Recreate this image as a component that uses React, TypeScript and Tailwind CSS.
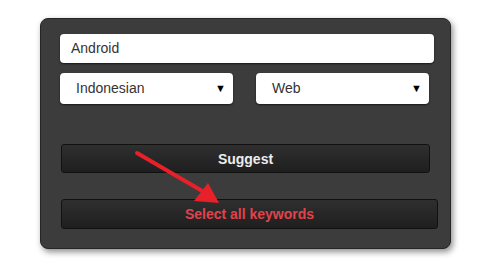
function Select({ label }: { label: string }) {
  return (
    <div className="w-[173px] h-[31px] bg-white rounded-[4px] shadow-[0_1px_2px_rgba(0,0,0,0.6)] flex items-center justify-between pl-[16px] pr-[7px]">
      <span className="text-[14px] text-[#333]">{label}</span>
      <span className="text-[11px] leading-none text-black">▼</span>
    </div>
  )
}

export default function App() {
  return (
    <div className="w-[497px] h-[266px] bg-white relative font-['Liberation_Sans',Arial,sans-serif]">
      <div className="pt-[18px] pl-[40px]">
        <div className="w-[411px] h-[231px] bg-[#3c3c3c] border border-[#262626] rounded-[8px] shadow-[2px_3px_6px_rgba(0,0,0,0.45)] pl-[19px] pt-[15px] flex flex-col">
          <div className="w-[374px] h-[29px] bg-white rounded-[4px] shadow-[0_1px_2px_rgba(0,0,0,0.6)] flex items-center pl-[11px] text-[14px] text-[#333]">
            Android
          </div>
          <div className="flex mt-[10px] gap-[23px]">
            <Select label="Indonesian" />
            <Select label="Web" />
          </div>
          <button className="mt-[40px] ml-[1px] w-[369px] h-[29px] pt-[1px] rounded-[3px] border border-[#111] bg-gradient-to-b from-[#2f2f2f] to-[#1f1f1f] text-[14px] font-bold text-[#ececec]">
            Suggest
          </button>
          <button className="mt-[26px] ml-[1px] w-[377px] h-[30px] rounded-[3px] border border-[#111] bg-gradient-to-b from-[#2f2f2f] to-[#1f1f1f] text-[14px] font-bold text-[#e0434c]">
            Select all keywords
          </button>
        </div>
      </div>
      {/* red annotation arrow */}
      <svg className="absolute left-0 top-0 pointer-events-none" width="497" height="266">
        <line x1="137" y1="153" x2="204" y2="192" stroke="#e8202a" strokeWidth="4" strokeLinecap="round" />
        <polygon points="219,203 194,201 208,183" fill="#e8202a" />
      </svg>
    </div>
  )
}
